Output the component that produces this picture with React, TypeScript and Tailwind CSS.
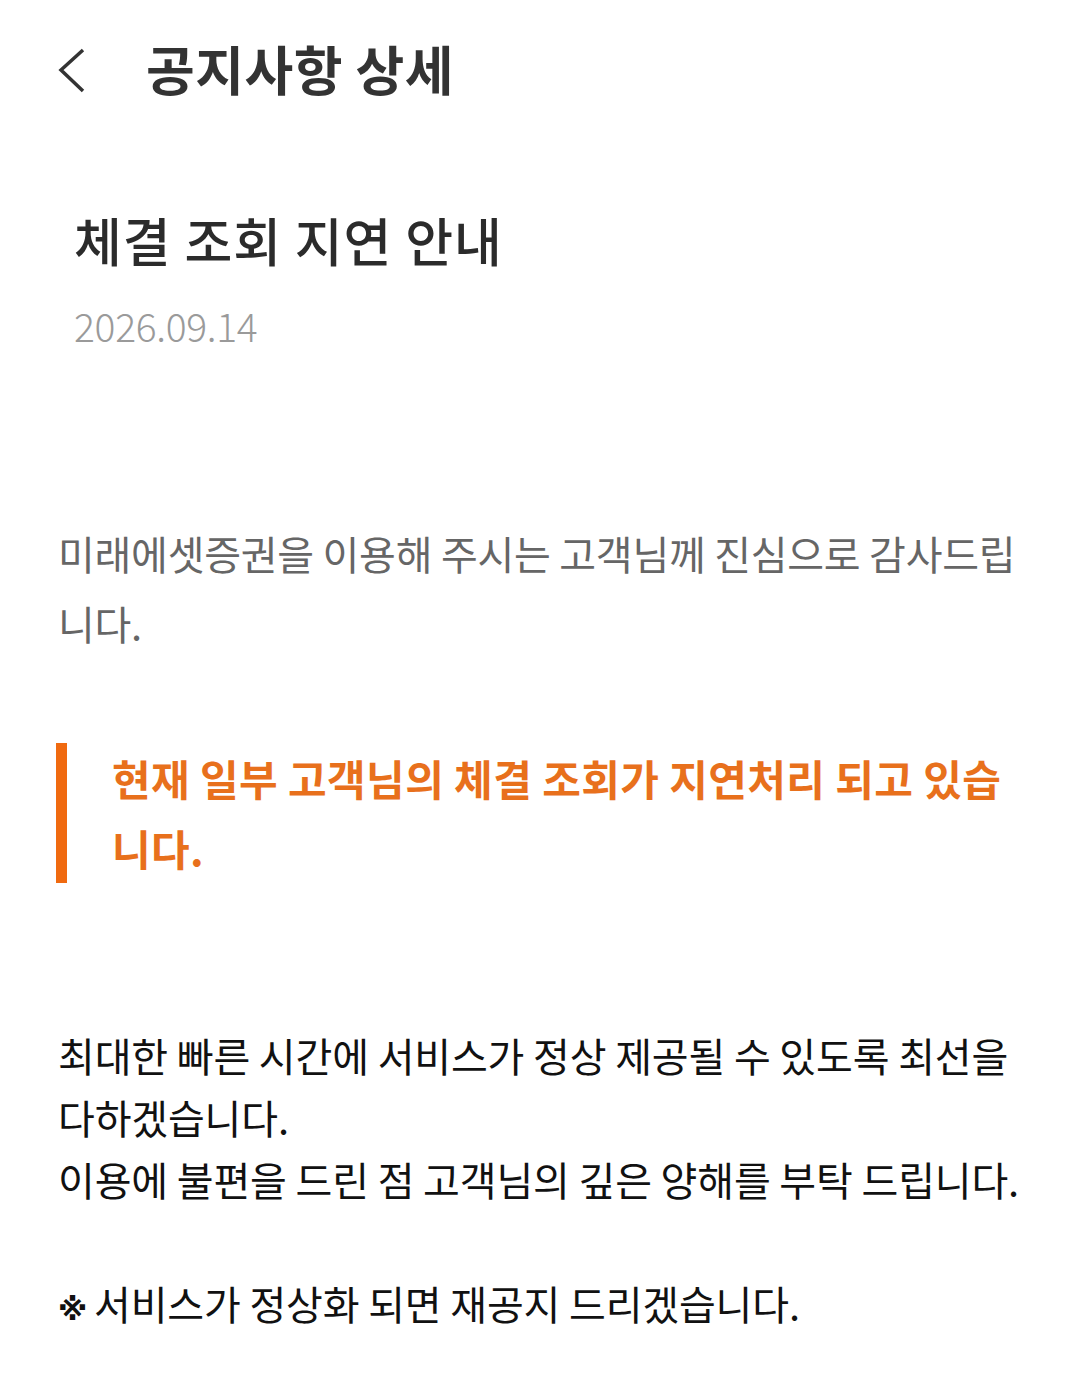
import React from "react";

const font = { fontFamily: '"Noto Sans CJK KR", "Noto Sans", sans-serif' };

const NoticeDetail = () => {
  return (
    <div className="min-h-[1374px] w-[1080px] bg-white" style={font}>
      {/* header */}
      <div className="flex items-center h-[140px] pl-[58px]">
        <button className="w-[30px] h-[50px] flex items-center">
          <svg width="30" height="50" viewBox="0 0 30 50" fill="none">
            <path d="M25 5 L3 25 L25 46" stroke="#333333" strokeWidth="3.5" strokeLinecap="butt" strokeLinejoin="miter" />
          </svg>
        </button>
        <h1 className="ml-[58px] text-[53px] font-bold text-[#333333] leading-none -mt-[4px] tracking-[0.5px]">
          공지사항 상세
        </h1>
      </div>

      {/* title */}
      <div className="pl-[74px] pt-[62px]">
        <h2 className="text-[52px] font-medium text-[#2b2b2b] leading-[76px] tracking-[1px]">체결 조회 지연 안내</h2>
        <p className="text-[39px] font-light text-[#9a9a9a] leading-[54px] mt-[20px] tracking-[-0.3px]">2026.09.14</p>
      </div>

      {/* body */}
      <div className="px-[58px] pt-[166px]">
        <p className="text-[40px] text-[#666666] leading-[70px] w-[970px] tracking-[-0.25px]">
          미래에셋증권을 이용해 주시는 고객님께 진심으로 감사드립니다.
        </p>

        <div className="mt-[85px] border-l-[11px] border-[#f06a10] pl-[45px] h-[140px] -ml-[2px]">
          <p className="text-[42px] font-bold text-[#e8701c] leading-[70px] w-[910px] tracking-[0.4px]">
            현재 일부 고객님의 체결 조회가 지연처리 되고 있습니다.
          </p>
        </div>

        <div className="mt-[141px] text-[40px] text-[#111111] leading-[62px] w-[970px] tracking-[-0.15px]">
          <p>최대한 빠른 시간에 서비스가 정상 제공될 수 있도록 최선을 다하겠습니다.</p>
          <p>이용에 불편을 드린 점 고객님의 깊은 양해를 부탁 드립니다.</p>
          <p>&nbsp;</p>
          <p>
            <span className="text-[30px] font-bold tracking-[-2px]" style={{ fontFamily: '"DejaVu Sans", sans-serif' }}>※</span> 서비스가 정상화 되면 재공지 드리겠습니다.
          </p>
        </div>
      </div>
    </div>
  );
};

export default function App() {
  return <NoticeDetail />;
}
